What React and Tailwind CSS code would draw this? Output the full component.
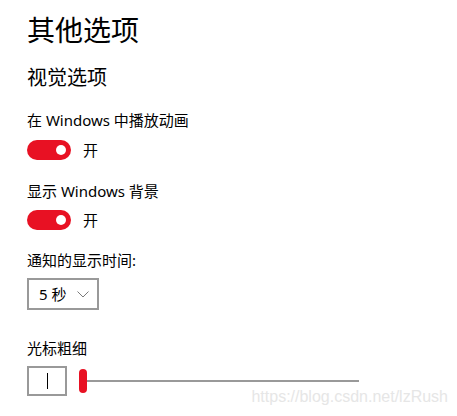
import React from 'react';

function Toggle({ label }) {
  return (
    <div className="flex items-center h-[20px]">
      <div className="relative w-[44px] h-[20px] rounded-full bg-[#e81123]">
        <div className="absolute right-[5px] top-[5px] w-[10px] h-[10px] rounded-full bg-white"></div>
      </div>
      <span className="ml-[12px] text-[15px] leading-[20px] text-black">{label}</span>
    </div>
  );
}

export default function App() {
  return (
    <div
      className="relative w-[457px] h-[416px] bg-white overflow-hidden pl-[27px] pt-[12px] text-black"
      style={{ fontFamily: '"Noto Sans", "Noto Sans CJK SC", sans-serif' }}
    >
      {/* Page title */}
      <h1 className="text-[28px] leading-[36px] font-normal">其他选项</h1>

      {/* Visual options */}
      <h2 className="mt-[17px] text-[20px] leading-[26px] font-normal">视觉选项</h2>

      <div className="mt-[19px] text-[15px] leading-[20px]">在 Windows 中播放动画</div>
      <div className="mt-[10px]">
        <Toggle label="开" />
      </div>

      <div className="mt-[21px] text-[15px] leading-[20px]">显示 Windows 背景</div>
      <div className="mt-[9px]">
        <Toggle label="开" />
      </div>

      <div className="mt-[20px] text-[15px] leading-[20px]">通知的显示时间:</div>
      <div className="mt-[8px] flex items-center w-[72px] h-[32px] border-2 border-[#999999] pl-[10px]">
        <span className="text-[15px] leading-[20px]">5 秒</span>
        <svg className="ml-[11px]" width="12" height="7" viewBox="0 0 12 7" fill="none">
          <path d="M0.5 0.5 L6 6 L11.5 0.5" stroke="#7a7a7a" strokeWidth="1" />
        </svg>
      </div>

      <div className="mt-[28px] text-[15px] leading-[20px]">光标粗细</div>
      <div className="mt-[8px] flex items-center">
        <div className="flex items-center justify-center w-[40px] h-[30px] border-2 border-[#999999]">
          <div className="w-[1px] h-[16px] bg-black"></div>
        </div>
        <div className="ml-[12px] flex items-center">
          <div className="w-[8px] h-[24px] rounded-full bg-[#e81123]"></div>
          <div className="w-[272px] h-[2px] bg-[#999999]"></div>
        </div>
      </div>

      {/* watermark */}
      <div
        className="absolute right-[9px] bottom-[9px] text-[16px] leading-[20px] text-[#e6e6e6]"
        style={{ fontFamily: '"Liberation Sans", Arial, sans-serif' }}
      >
        https://blog.csdn.net/lzRush
      </div>
    </div>
  );
}
